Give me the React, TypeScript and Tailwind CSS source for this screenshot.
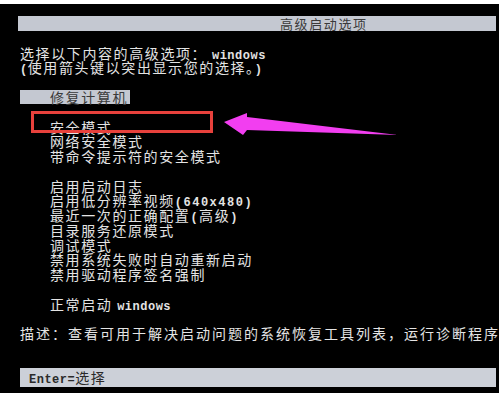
const menuTop = ['安全模式', '网络安全模式', '带命令提示符的安全模式'];

function Mono({ children, wide }: { children: React.ReactNode; wide?: boolean }) {
  return (
    <span
      className={
        wide
          ? "font-['Liberation_Mono',monospace] text-[12px] leading-[10px] font-bold tracking-[1.5px]"
          : "font-['Liberation_Mono',monospace] text-[12px] leading-[10px] font-bold tracking-[0.5px]"
      }
    >
      {children}
    </span>
  );
}

function Row({ children }: { children?: React.ReactNode }) {
  return <div className="h-[14.75px] whitespace-nowrap">{children ?? '\u00a0'}</div>;
}

export default function App() {
  return (
    <div className="relative w-[499px] h-[393px] overflow-hidden bg-black border-t-4 border-white font-['Noto_Sans_CJK_SC',sans-serif] text-[14px] leading-[14.75px] tracking-[1.6px] text-[#e4e4e4]">
      <div className="pt-3 pl-[18px] pr-[3px]">
        {/* title bar */}
        <div className="h-[15px] bg-[#c4c8d1] pl-[262px] text-[13px] text-[#3a3a3a] leading-[15px] whitespace-nowrap">
          高级启动选项
        </div>

        <div className="mt-[14.6px] pl-[2px]">
          <Row>
            选择以下内容的高级选项： <Mono>windows</Mono>
          </Row>
          <Row>
            <Mono>(</Mono>使用箭头键以突出显示您的选择。<Mono>)</Mono>
          </Row>
        </div>

        {/* selected entry */}
        <div className="mt-[15px] ml-[2px] w-[110px] h-[14px] bg-[#c4c8d1] pl-[30px] text-[#3a3a3a] leading-[14px] whitespace-nowrap">
          修复计算机
        </div>

        <div className="mt-[15.6px] pl-[32px]">
          {menuTop.map((t) => (
            <Row key={t}>{t}</Row>
          ))}
          <Row />
          <Row>启用启动日志</Row>
          <Row>
            启用低分辨率视频<Mono wide>(640x480)</Mono>
          </Row>
          <Row>
            最近一次的正确配置<Mono wide>(</Mono>高级<Mono wide>)</Mono>
          </Row>
          <Row>目录服务还原模式</Row>
          <Row>调试模式</Row>
          <Row>禁用系统失败时自动重新启动</Row>
          <Row>禁用驱动程序签名强制</Row>
          <Row />
          <Row>
            正常启动 <Mono>windows</Mono>
          </Row>
          <Row />
        </div>

        <div className="pl-[2px] h-[14.75px] whitespace-nowrap tracking-[2px]">
          描述：查看可用于解决启动问题的系统恢复工具列表，运行诊断程序
        </div>

        {/* footer bar */}
        <div className="mt-[27px] ml-[2px] h-[19px] bg-[#ccd0d8] pl-[9px] leading-[19px] text-[#2a2a2a] whitespace-nowrap">
          <Mono>Enter=</Mono>选择
        </div>
      </div>

      {/* annotation: red box + arrow */}
      <div className="absolute left-[31px] top-[107px] w-[182px] h-[22px] border-[3px] border-[#e8413c]" />
      <svg className="absolute left-0 top-[-4px]" width="499" height="393" viewBox="0 0 499 393">
        <polygon
          points="224,122 247,113 247,117 398,135 247,130 243,135"
          fill="#f23ef0"
        />
      </svg>
    </div>
  );
}
